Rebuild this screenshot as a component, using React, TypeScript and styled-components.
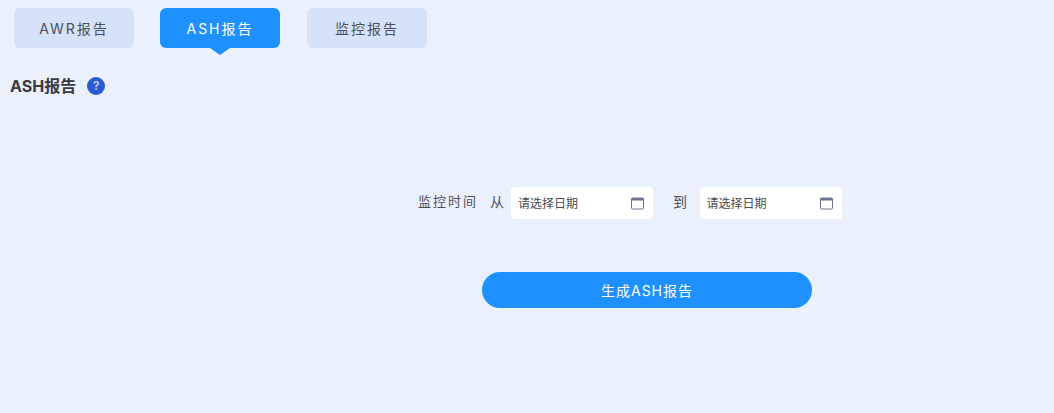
import React, { useState } from 'react';
import styled, { createGlobalStyle } from 'styled-components';

const GlobalStyle = createGlobalStyle`
  html, body {
    margin: 0;
    padding: 0;
    height: 100%;
    background: #eaf0fc;
    font-family: Inter, "Noto Sans CJK SC", sans-serif;
  }
`;

const Page = styled.div`
  width: 1054px;
  height: 413px;
  overflow: hidden;
  box-sizing: border-box;
  padding-top: 8px;
  background: #eaf0fc;
`;

const TabBar = styled.div`
  display: flex;
  gap: 26px;
  padding-left: 14px;
`;

const Tab = styled.button<{ $active?: boolean }>`
  position: relative;
  width: 120px;
  height: 40px;
  padding: 0;
  border: none;
  border-radius: 6px;
  font: inherit;
  font-size: 14px;
  letter-spacing: 2px;
  cursor: pointer;
  color: ${({ $active }) => ($active ? '#fff' : '#4a4f5a')};
  background: ${({ $active }) => ($active ? '#1e90ff' : '#d6e2f9')};

  &:last-child {
    margin-left: 1px;
  }

  &::after {
    content: '';
    display: ${({ $active }) => ($active ? 'block' : 'none')};
    position: absolute;
    left: 50%;
    top: 100%;
    margin-left: -10px;
    border-style: solid;
    border-width: 7px 10px 0;
    border-color: #1e90ff transparent transparent;
  }
`;

const TitleRow = styled.div`
  display: flex;
  align-items: center;
  gap: 11px;
  height: 24px;
  margin-top: 25px;
  padding-left: 10px;
`;

const Title = styled.h2`
  margin: 0;
  font-size: 16px;
  font-weight: 700;
  color: #3a3a3f;
`;

const HelpBadge = styled.span`
  display: flex;
  align-items: center;
  justify-content: center;
  width: 18px;
  height: 18px;
  margin-top: 1px;
  border-radius: 50%;
  background: #2b5bd0;
  color: #c3d3f5;
  font-size: 12px;
  font-weight: 600;
`;

const FormRow = styled.div`
  display: flex;
  align-items: center;
  height: 32px;
  margin-top: 90px;
  padding-left: 418px;
`;

const Label = styled.span`
  font-size: 13px;
  letter-spacing: 2px;
  color: #4a4f5a;
  margin-top: -5px;
`;

const FromLabel = styled(Label)`
  margin-left: 12px;
  margin-right: 7px;
  font-size: 14px;
  letter-spacing: 0;
`;

const ToLabel = styled(Label)`
  margin-left: 20px;
  margin-right: 12.6px;
  font-size: 14px;
  letter-spacing: 0;
`;

const DateField = styled.div`
  display: flex;
  align-items: center;
  justify-content: space-between;
  box-sizing: border-box;
  width: 142px;
  height: 32px;
  padding: 0 9px 0 7px;
  background: #fff;
  border-radius: 4px;
`;

const Placeholder = styled.span`
  font-size: 12px;
  color: #4a4a4f;
  padding-bottom: 2px;
`;

const CalendarIcon = styled.svg`
  display: block;
  width: 13px;
  height: 13px;
`;

const SubmitRow = styled.div`
  margin-top: 53px;
  padding-left: 482px;
`;

const SubmitButton = styled.button`
  width: 330px;
  height: 36px;
  padding: 0;
  border: none;
  border-radius: 18px;
  background: #1e90ff;
  color: #fff;
  font: inherit;
  font-size: 14px;
  letter-spacing: 1px;
  cursor: pointer;
`;

const tabs = ['AWR报告', 'ASH报告', '监控报告'];

const DateInput: React.FC = () => (
  <DateField>
    <Placeholder>请选择日期</Placeholder>
    <CalendarIcon viewBox="0 0 13 13">
      <rect x="0.5" y="1" width="12" height="11" rx="1" fill="none" stroke="#6f7590" />
      <rect x="0.5" y="1" width="12" height="2.5" fill="#6f7590" />
    </CalendarIcon>
  </DateField>
);

export default function App() {
  const [active, setActive] = useState(1);

  return (
    <Page>
      <GlobalStyle />
      <TabBar>
        {tabs.map((t, i) => (
          <Tab key={t} $active={i === active} onClick={() => setActive(i)}>
            {t}
          </Tab>
        ))}
      </TabBar>
      <TitleRow>
        <Title>ASH报告</Title>
        <HelpBadge>?</HelpBadge>
      </TitleRow>
      <FormRow>
        <Label>监控时间</Label>
        <FromLabel>从</FromLabel>
        <DateInput />
        <ToLabel>到</ToLabel>
        <DateInput />
      </FormRow>
      <SubmitRow>
        <SubmitButton>生成ASH报告</SubmitButton>
      </SubmitRow>
    </Page>
  );
}
